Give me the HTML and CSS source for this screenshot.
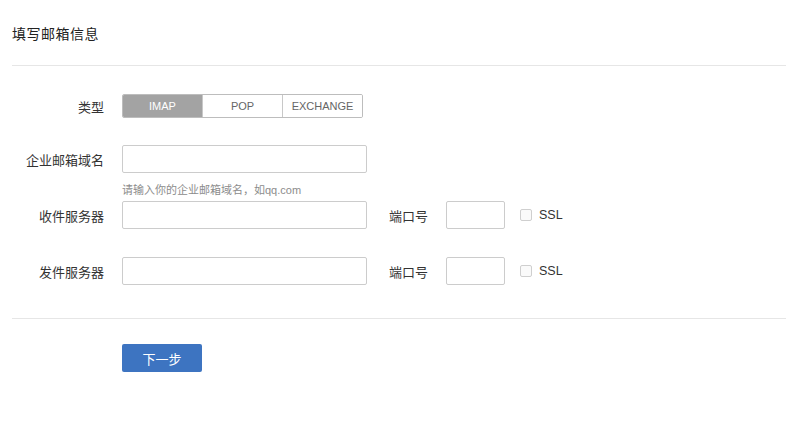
FILE: index.html
```html
<!DOCTYPE html>
<html lang="zh-CN">
<head>
<meta charset="utf-8">
<title>填写邮箱信息</title>
<link rel="stylesheet" href="styles.css">
</head>
<body>
<div class="page">
  <div class="header">
    <h1 class="title">填写邮箱信息</h1>
  </div>
  <div class="form">
    <div class="row row-type">
      <label class="label">类型</label>
      <div class="segmented">
        <span class="seg active">IMAP</span>
        <span class="seg">POP</span>
        <span class="seg">EXCHANGE</span>
      </div>
    </div>
    <div class="row row-domain">
      <label class="label">企业邮箱域名</label>
      <input class="input" type="text">
    </div>
    <div class="hint-row">
      <span class="hint">请输入你的企业邮箱域名，如qq.com</span>
    </div>
    <div class="row row-server">
      <label class="label">收件服务器</label>
      <input class="input" type="text">
      <span class="port-label">端口号</span>
      <input class="port" type="text">
      <span class="check"></span>
      <span class="ssl">SSL</span>
    </div>
    <div class="row row-server2">
      <label class="label">发件服务器</label>
      <input class="input" type="text">
      <span class="port-label">端口号</span>
      <input class="port" type="text">
      <span class="check"></span>
      <span class="ssl">SSL</span>
    </div>
  </div>
  <div class="footer">
    <button class="btn-next">下一步</button>
  </div>
</div>
</body>
</html>
```

FILE: styles.css
```css
html, body {
  margin: 0;
  padding: 0;
  background: #ffffff;
}
body {
  font-family: "Liberation Sans", "Noto Sans CJK SC", sans-serif;
  color: #333333;
}
.page {
  padding: 0 14px 0 12px;
}
.header {
  height: 66px;
  border-bottom: 1px solid #e6e6e6;
  box-sizing: border-box;
  display: flex;
  align-items: flex-start;
}
.title {
  margin: 24px 0 0 0;
  font-size: 14px;
  font-weight: normal;
  line-height: 20px;
  color: #222;
  letter-spacing: 0.5px;
}
.form {
  padding-top: 28px;
  padding-bottom: 33px;
  border-bottom: 1px solid #e6e6e6;
}
.row {
  display: flex;
  align-items: center;
}
.label {
  width: 92px;
  text-align: right;
  font-size: 13px;
  color: #333;
  margin-right: 18px;
  flex: none;
}
.segmented {
  display: flex;
  border: 1px solid #bdbdbd;
  border-radius: 2px;
  height: 24px;
  box-sizing: border-box;
  overflow: hidden;
}
.seg {
  width: 79px;
  display: flex;
  align-items: center;
  justify-content: center;
  font-size: 11px;
  color: #666;
  background: #fff;
}
.seg + .seg {
  border-left: 1px solid #c8c8c8;
}
.seg.active {
  background: #a3a3a3;
  color: #fff;
}
.row-domain {
  margin-top: 27px;
}
.input {
  width: 245px;
  height: 28px;
  box-sizing: border-box;
  border: 1px solid #cccccc;
  border-radius: 2px;
  margin: 0;
  padding: 0 6px;
  background: #fff;
  flex: none;
}
.hint-row {
  padding-left: 110px;
  margin-top: 8px;
  margin-bottom: 3px;
  line-height: 16px;
}
.hint {
  font-size: 11px;
  color: #8c8c8c;
}
.row-server2 {
  margin-top: 28px;
}
.port-label {
  font-size: 13px;
  margin-left: 22px;
  margin-right: 18px;
}
.port {
  width: 59px;
  height: 28px;
  box-sizing: border-box;
  border: 1px solid #cccccc;
  border-radius: 2px;
  margin: 0;
  padding: 0 4px;
  flex: none;
}
.check {
  width: 12px;
  height: 12px;
  box-sizing: border-box;
  border: 1px solid #cfcfcf;
  border-radius: 2px;
  background: #fafafa;
  margin-left: 15px;
  margin-right: 7px;
}
.ssl {
  font-size: 12.5px;
  color: #333;
}
.footer {
  padding: 25px 0 0 110px;
}
.btn-next {
  width: 80px;
  height: 28px;
  border: none;
  border-radius: 2px;
  background: #3d74c1;
  color: #fff;
  font-family: "Liberation Sans", "Noto Sans CJK SC", sans-serif;
  font-size: 13px;
  padding: 0;
  display: block;
}
```
